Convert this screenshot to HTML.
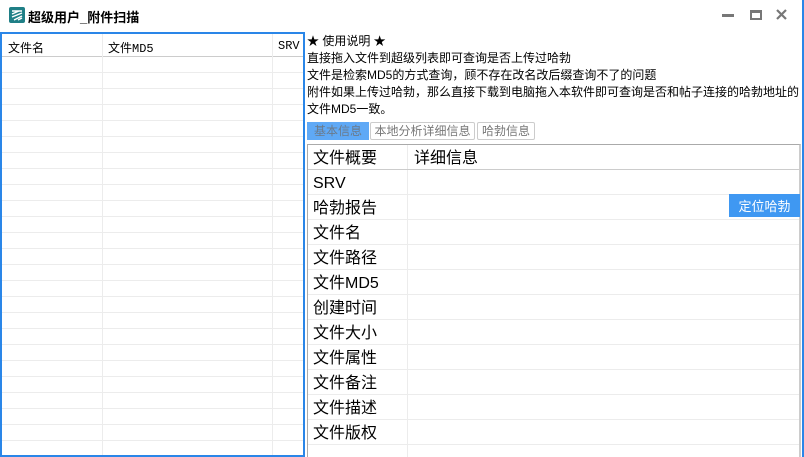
<!DOCTYPE html>
<html><head><meta charset="utf-8"><style>
*{margin:0;padding:0;box-sizing:border-box}
body{width:804px;height:457px;background:#fff;position:relative;overflow:hidden;font-family:"Liberation Sans","Noto Sans CJK SC",sans-serif;font-size:12px;color:#000}
.a{position:absolute}
.win{position:absolute;left:0;top:0;width:804px;height:457px;border-right:2px solid #2a86e8}
.lt{position:absolute;left:0;top:32px;width:305px;height:425px;border:2px solid #2a86e8;overflow:hidden}
.hl{position:absolute;left:0;right:0;height:1px;background:#ececec}
.vl{position:absolute;top:0;bottom:0;width:1px;background:#ececec}
.rt{position:absolute;left:307px;top:144px;width:494px;height:313px;border:1px solid #aaa;border-right:2px solid #ccc;border-bottom:none}
.row{position:absolute;left:0;right:0;height:25px;border-bottom:1px solid #ececec;font-size:16px;line-height:28px;padding-left:5px}
</style></head><body>
<div class="win"></div>
<svg class="a" style="left:9px;top:7px" width="16" height="16" viewBox="0 0 16 16"><rect width="16" height="16" rx="2" fill="#1f7f86"/><path d="M3 4h10M3 7l7-3M3 10l10-4M5 13l8-4M9 13l4-2" stroke="#fff" stroke-width="1.4" fill="none"/></svg>
<div class="a" style="left:28px;top:7px;font-size:13px;font-weight:bold">超级用户_附件扫描</div>
<div class="a" style="left:722px;top:14px;width:12px;height:3px;background:#777"></div>
<div class="a" style="left:750px;top:10px;width:12px;height:10px;border:2px solid #777;border-top-width:3px"></div>
<svg class="a" style="left:776px;top:9px" width="11" height="11" viewBox="0 0 11 11"><path d="M1 1l9 9M10 1l-9 9" stroke="#777" stroke-width="2.2"/></svg>
<div class="lt">
 <div class="a" style="left:0;top:0;right:0;height:23px;border-bottom:1px solid #ccc"></div>
 <div class="a" style="left:6px;top:5px">文件名</div>
 <div class="a" style="left:106px;top:5px;font-family:'Liberation Mono','Noto Sans CJK SC',monospace">文件MD5</div>
 <div class="a" style="left:276px;top:5px;font-family:'Liberation Mono',monospace;font-size:12px">SRV</div>
 <div class="vl" style="left:100px"></div><div class="vl" style="left:270px"></div>
 <div class="hl" style="top:38px"></div><div class="hl" style="top:54px"></div><div class="hl" style="top:70px"></div><div class="hl" style="top:86px"></div><div class="hl" style="top:102px"></div><div class="hl" style="top:118px"></div><div class="hl" style="top:134px"></div><div class="hl" style="top:150px"></div><div class="hl" style="top:166px"></div><div class="hl" style="top:182px"></div><div class="hl" style="top:198px"></div><div class="hl" style="top:214px"></div><div class="hl" style="top:230px"></div><div class="hl" style="top:246px"></div><div class="hl" style="top:262px"></div><div class="hl" style="top:278px"></div><div class="hl" style="top:294px"></div><div class="hl" style="top:310px"></div><div class="hl" style="top:326px"></div><div class="hl" style="top:342px"></div><div class="hl" style="top:358px"></div><div class="hl" style="top:374px"></div><div class="hl" style="top:390px"></div><div class="hl" style="top:406px"></div>
</div>
<div class="a" style="left:307px;top:33px;line-height:17px">★ 使用说明 ★<br>直接拖入文件到超级列表即可查询是否上传过哈勃<br>文件是检索MD5的方式查询，顾不存在改名改后缀查询不了的问题<br>附件如果上传过哈勃，那么直接下载到电脑拖入本软件即可查询是否和帖子连接的哈勃地址的<br>文件MD5一致。</div>
<div class="a" style="left:307px;top:122px;width:62px;height:18px;background:#5fa9f6;color:#6b7a8a;line-height:18px;text-align:center">基本信息</div>
<div class="a" style="left:370px;top:122px;width:105px;height:18px;border:1px solid #ccc;border-radius:2px;color:#777;line-height:16px;text-align:center">本地分析详细信息</div>
<div class="a" style="left:477px;top:122px;width:58px;height:18px;border:1px solid #ccc;border-radius:2px;color:#777;line-height:16px;text-align:center">哈勃信息</div>
<div class="rt">
 <div class="vl" style="left:99px"></div>
 <div class="row" style="top:0;border-bottom:1px solid #ccc">文件概要<span style="position:absolute;left:106px">详细信息</span></div>
 <div class="row" style="top:25px">SRV</div>
 <div class="row" style="top:50px">哈勃报告</div>
 <div class="row" style="top:75px">文件名</div>
 <div class="row" style="top:100px">文件路径</div>
 <div class="row" style="top:125px">文件MD5</div>
 <div class="row" style="top:150px">创建时间</div>
 <div class="row" style="top:175px">文件大小</div>
 <div class="row" style="top:200px">文件属性</div>
 <div class="row" style="top:225px">文件备注</div>
 <div class="row" style="top:250px">文件描述</div>
 <div class="row" style="top:275px">文件版权</div>
</div>
<div class="a" style="left:729px;top:194px;width:71px;height:23px;background:#3f98f2;color:#fff;line-height:25px;text-align:center;font-size:13px">定位哈勃</div>
</body></html>
